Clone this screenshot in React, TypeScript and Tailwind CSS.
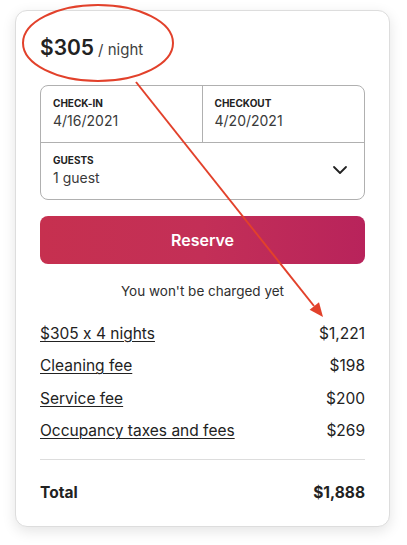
import React from 'react';
import { ChevronDown } from 'lucide-react';

const lines = [
  { label: '$305 x 4 nights', amount: '$1,221' },
  { label: 'Cleaning fee', amount: '$198' },
  { label: 'Service fee', amount: '$200' },
  { label: 'Occupancy taxes and fees', amount: '$269' },
];

export default function App() {
  return (
    <div className="relative w-[407px] h-[545px] bg-white overflow-hidden text-[#222222] font-['Inter','Liberation_Sans',sans-serif] [font-feature-settings:'calt'_0]">
      <div className="ml-[15px] mt-[10px] w-[375px] h-[517px] rounded-xl border border-[#dddddd] bg-white shadow-[0_4px_14px_rgba(0,0,0,0.11)] px-[24px] pt-[23px]">
        {/* price */}
        <div className="flex items-baseline gap-1 leading-[28px]">
          <span className="text-[21px] font-semibold">$305</span>
          <span className="text-[15px] text-[#3f3f3f]">/ night</span>
        </div>

        {/* dates + guests */}
        <div className="mt-[21px] rounded-lg border border-[#b0b0b0]">
          <div className="grid grid-cols-2 h-[57px] border-b border-[#b0b0b0]">
            <div className="px-3 pt-[11px] border-r border-[#b0b0b0]">
              <div className="text-[10px] leading-[12px] font-bold uppercase">Check-in</div>
              <div className="mt-[2px] text-[14px] leading-[20px] text-[#3a3a3a]">4/16/2021</div>
            </div>
            <div className="px-3 pt-[11px]">
              <div className="text-[10px] leading-[12px] font-bold uppercase">Checkout</div>
              <div className="mt-[2px] text-[14px] leading-[20px] text-[#3a3a3a]">4/20/2021</div>
            </div>
          </div>
          <div className="flex items-center justify-between h-[56px] pl-3 pr-[12px]">
            <div>
              <div className="text-[10px] leading-[12px] font-bold uppercase">Guests</div>
              <div className="mt-[2px] text-[14px] leading-[20px] text-[#3a3a3a]">1 guest</div>
            </div>
            <ChevronDown className="w-[24px] h-[24px] mt-[-2px]" strokeWidth={1.8} />
          </div>
        </div>

        {/* reserve */}
        <button className="mt-[16px] w-full h-[48px] rounded-lg bg-gradient-to-r from-[#c6304f] via-[#c32f57] to-[#b8235b] text-white text-[16px] font-semibold">
          Reserve
        </button>

        <p className="mt-[17px] text-center text-[13.5px] leading-[20px] text-[#2f2f2f]">
          You won't be charged yet
        </p>

        {/* breakdown */}
        <div className="mt-[21px] flex flex-col gap-[8.4px]">
          {lines.map((l) => (
            <div key={l.label} className="flex justify-between text-[15.5px] leading-[24px]">
              <span className="underline underline-offset-2 decoration-1">{l.label}</span>
              <span>{l.amount}</span>
            </div>
          ))}
        </div>

        <div className="mt-[16px] border-t border-[#dddddd]" />

        <div className="mt-[21px] flex justify-between text-[15.5px] leading-[24px] font-bold">
          <span>Total</span>
          <span>$1,888</span>
        </div>
      </div>

      {/* annotation overlay */}
      <svg className="absolute inset-0 pointer-events-none" width="407" height="545" viewBox="0 0 407 545">
        <ellipse cx="98" cy="43" rx="75" ry="38" fill="none" stroke="#e2412b" strokeWidth="2" />
        <line x1="136" y1="82" x2="314" y2="306" stroke="#e2412b" strokeWidth="2" />
        <polygon points="323,317 309.6,309.7 319,302.3" fill="#e2412b" />
      </svg>
    </div>
  );
}
